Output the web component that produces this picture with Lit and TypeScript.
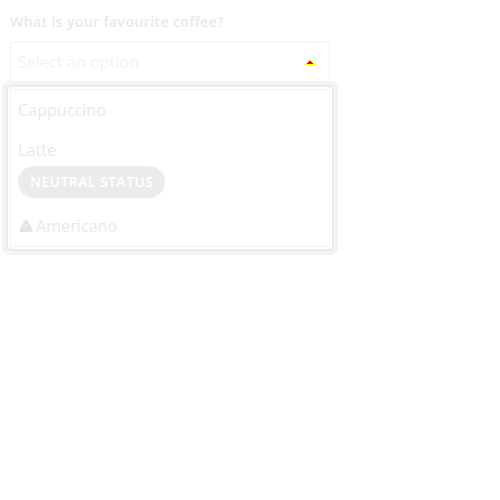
import { LitElement, html, css } from "lit";
import { customElement } from "lit/decorators.js";

@customElement("app-root")
class AppRoot extends LitElement {
  static styles = css`
    :host {
      display: block;
      box-sizing: border-box;
      width: 500px;
      height: 500px;
      padding: 10px;
      overflow: hidden;
      background: #fff;
      font: 400 16px/24px "Open Sans", sans-serif;
      letter-spacing: 0.08px;
      color: #e9e9e9;
    }
    * { box-sizing: border-box; }
    .field { position: relative; width: 320px; }
    .label {
      display: block;
      height: 24px;
      margin-bottom: 8px;
      font-size: 14px;
      font-weight: 600;
      letter-spacing: 0.4px;
      white-space: nowrap;
    }
    .control {
      display: flex;
      align-items: center;
      justify-content: space-between;
      height: 40px;
      padding: 0 14px 0 7px;
      border: 1px solid #f2f2f2;
      border-radius: 2px;
      color: #f3f3f3;
    }
    .caret { display: block; width: 10px; height: 5px; }
    .menu {
      position: absolute;
      top: 79px;
      left: 0;
      width: 320px;
      height: 158px;
      margin: 0;
      padding: 0 7px;
      list-style: none;
      background: #fff;
      border: 1px solid #f2f2f2;
      border-radius: 2px;
      box-shadow: 0 0 0 2px #fff, 0 0 0 4px #ebebeb, 0 0 0 8px #f4f4f4;
    }
    .option { padding: 8px 0; }
    .row { display: flex; align-items: center; gap: 2px; }
    .status {
      display: flex;
      align-items: center;
      width: 147px;
      height: 32px;
      margin-top: 4px;
      padding: 0 12px;
      border-radius: 16px;
      background: #ebebeb;
      color: #fff;
      font-size: 14px;
      font-weight: 600;
      letter-spacing: 0.42px;
      white-space: nowrap;
    }
    .warning { width: 16px; height: 16px; fill: #e4e4e4; }
  `;

  render() {
    return html`
      <div class="field">
        <span class="label">What is your favourite coffee?</span>
        <div class="control">
          <span>Select an option</span>
          <svg class="caret" viewBox="0 0 10 5" shape-rendering="crispEdges">
            <path fill="#ff0" d="M4 0h2v1h1v1h1v1h1v1h1v1H0V4h1V3h1V2h1V1h1z" />
            <path fill="#e00" d="M4 1h2v1h1v1h1v1H2V3h1V2h1z" />
          </svg>
        </div>
        <ul class="menu">
          <li class="option">Cappuccino</li>
          <li class="option">Latte<div class="status">NEUTRAL STATUS</div></li>
          <li class="option row">
            <svg class="warning" viewBox="0 0 16 16">
              <path fill-rule="evenodd" d="M8 1.600c.6 0 1.100.3 1.400.9l5 9.100c.6 1.200 0 2.500-1.300 2.500H2.900c-1.300 0-1.900-1.300-1.300-2.500l5-9.100c.3-.6.800-.9 1.400-.9zM7.400 6v3h1.200V6zM7.400 10.500v1.500h1.200v-1.500z" />
            </svg>
            <span>Americano</span>
          </li>
        </ul>
      </div>
    `;
  }
}
